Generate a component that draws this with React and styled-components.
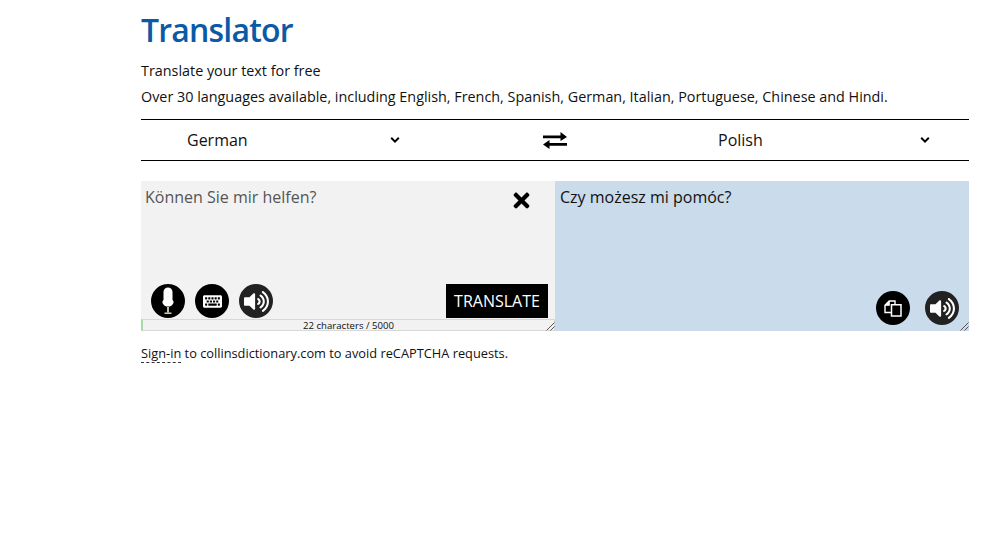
import React from 'react'
import styled, { createGlobalStyle } from 'styled-components'
import { FaTimes, FaKeyboard, FaVolumeUp } from 'react-icons/fa'

const GlobalStyle = createGlobalStyle`
  html, body {
    margin: 0;
    background: #fff;
    font-family: 'Open Sans', 'Liberation Sans', sans-serif;
    color: #111;
  }
`

const Page = styled.div`
  width: 828px;
  min-height: 556px;
  margin-left: 141px;
  box-sizing: border-box;
  padding-top: 8px;
`

const Title = styled.h1`
  margin: 0 0 9px;
  font-size: 32px;
  line-height: 44px;
  font-weight: 600;
  letter-spacing: -0.8px;
  color: #0a5aa6;
`

const Intro = styled.p`
  margin: 0 0 7px;
  font-size: 14.37px;
  line-height: 19px;
`

const LangBar = styled.div`
  display: grid;
  grid-template-columns: 1fr 1fr;
  height: 40px;
  margin-top: 13px;
  border-top: 1px solid #000;
  border-bottom: 1px solid #000;
  position: relative;
`

const LangSelect = styled.div`
  display: flex;
  align-items: center;
  justify-content: space-between;
  padding: 0 ${(p) => p.$right}px 0 ${(p) => p.$left}px;
  font-size: 16px;
`

const Swap = styled.svg`
  position: absolute;
  left: 401px;
  top: 11px;
  width: 26px;
  height: 19px;
`

const Panels = styled.div`
  display: grid;
  grid-template-columns: 414px 414px;
  height: 150px;
  margin-top: 20px;
`

const SourcePanel = styled.div`
  position: relative;
  display: flex;
  flex-direction: column;
  background: #f2f2f2;
`

const TargetPanel = styled.div`
  position: relative;
  display: flex;
  flex-direction: column;
  background: #cadbec;
`

const PanelText = styled.div`
  flex: 1;
  padding: 5px 5px 0 ${(p) => p.$left}px;
  font-size: 16px;
  line-height: 22px;
  color: ${(p) => p.$color};
`

const Clear = styled.div`
  position: absolute;
  top: 8px;
  right: 22px;
  font-size: 23px;
  line-height: 23px;
  height: 23px;
  color: #000;
`

const Tools = styled.div`
  display: flex;
  align-items: center;
  justify-content: space-between;
  padding: 0 7px 0 10px;
  height: 34px;
  margin-bottom: 1px;
`

const RoundGroup = styled.div`
  display: flex;
  gap: 10px;
`

const Round = styled.div`
  width: 34px;
  height: 34px;
  border-radius: 50%;
  background: ${(p) => p.$bg || '#000'};
  color: #fff;
  display: flex;
  align-items: center;
  justify-content: center;
  font-size: ${(p) => p.$size || 20}px;
`

const TranslateButton = styled.div`
  width: 102px;
  height: 34px;
  background: #000;
  color: #fff;
  font-size: 16px;
  line-height: 34px;
  text-align: center;
`

const Counter = styled.div`
  height: 10px;
  border: 1px solid #d8d8d8;
  border-left: 2px solid #a5dca5;
  font-size: 9.6px;
  font-weight: 500;
  line-height: 11px;
  text-align: center;
  color: #111;
`

const TargetTools = styled.div`
  display: flex;
  justify-content: flex-end;
  gap: 15px;
  padding-right: 10px;
  margin-bottom: 6px;
`

const Grip = styled.svg`
  position: absolute;
  right: 0;
  bottom: 0;
  width: 10px;
  height: 10px;
`

const Note = styled.p`
  margin: 13px 0 0;
  font-size: 12.8px;
  line-height: 18px;
`

const SignIn = styled.span`
  border-bottom: 1px dashed #333;
`

const Chevron = () => (
  <svg width="10" height="8" viewBox="0 0 10 8">
    <path d="M1.2 1.8 L5 5.6 L8.8 1.8" fill="none" stroke="#000" strokeWidth="2" />
  </svg>
)

const Mic = () => (
  <svg width="16" height="28" viewBox="0 0 16 28">
    <path d="M3.5 5 a4.5 4.5 0 0 1 9 0 V13 q1.5 1 1 3 a6 6 0 0 1 -11 0 q-.5 -2 1 -3 Z" fill="#fff" />
    <path d="M8 20 v5.5" stroke="#f6efd8" strokeWidth="1.6" fill="none" />
    <path d="M4.5 26.2 h7" stroke="#f6efd8" strokeWidth="1.3" fill="none" />
  </svg>
)

const Copy = () => (
  <svg width="18" height="17" viewBox="0 0 18 17">
    <path d="M1 5.2 L5.2 1 H11 V12.5 H1 Z" fill="#000" stroke="#fff" strokeWidth="1.4" />
    <path d="M5.2 1 V5.2 H1" fill="#fff" stroke="#fff" strokeWidth="1.2" />
    <path d="M7.5 4.7 H17 V16 H7.5 Z" fill="#000" stroke="#fff" strokeWidth="1.5" />
  </svg>
)

const Grips = () => (
  <Grip viewBox="0 0 10 10">
    <path d="M9.5 1.5 L1.5 9.5 M9.5 5.5 L5.5 9.5" stroke="#555" strokeWidth="1" />
  </Grip>
)

const App = () => (
  <Page>
    <GlobalStyle />
    <Title>Translator</Title>
    <Intro>Translate your text for free</Intro>
    <Intro>Over 30 languages available, including English, French, Spanish, German, Italian, Portuguese, Chinese and Hindi.</Intro>
    <LangBar>
      <LangSelect $left={46} $right={155}>
        German
        <Chevron />
      </LangSelect>
      <Swap viewBox="0 0 26 19">
        <path d="M1 4.5 H18.5 V1 L25 6 L18.5 10 V7.2 H1 Z" fill="#000" />
        <path d="M25 12 H7.5 V9 L1 13.5 L7.5 18 V14.8 H25 Z" fill="#000" />
      </Swap>
      <LangSelect $left={163} $right={39}>
        Polish
        <Chevron />
      </LangSelect>
    </LangBar>
    <Panels>
      <SourcePanel>
        <PanelText $color="#555" $left={4}>Können Sie mir helfen?</PanelText>
        <Clear>
          <FaTimes />
        </Clear>
        <Tools>
          <RoundGroup>
            <Round>
              <Mic />
            </Round>
            <Round $size={19}>
              <FaKeyboard />
            </Round>
            <Round $bg="#222" $size={25}>
              <FaVolumeUp />
            </Round>
          </RoundGroup>
          <TranslateButton>TRANSLATE</TranslateButton>
        </Tools>
        <Counter>22 characters / 5000</Counter>
        <Grips />
      </SourcePanel>
      <TargetPanel>
        <PanelText $color="#111" $left={5}>Czy możesz mi pomóc?</PanelText>
        <TargetTools>
          <Round>
            <Copy />
          </Round>
          <Round $bg="#222" $size={25}>
            <FaVolumeUp />
          </Round>
        </TargetTools>
        <Grips />
      </TargetPanel>
    </Panels>
    <Note>
      <SignIn>Sign-in</SignIn> to collinsdictionary.com to avoid reCAPTCHA requests.
    </Note>
  </Page>
)

export default App
